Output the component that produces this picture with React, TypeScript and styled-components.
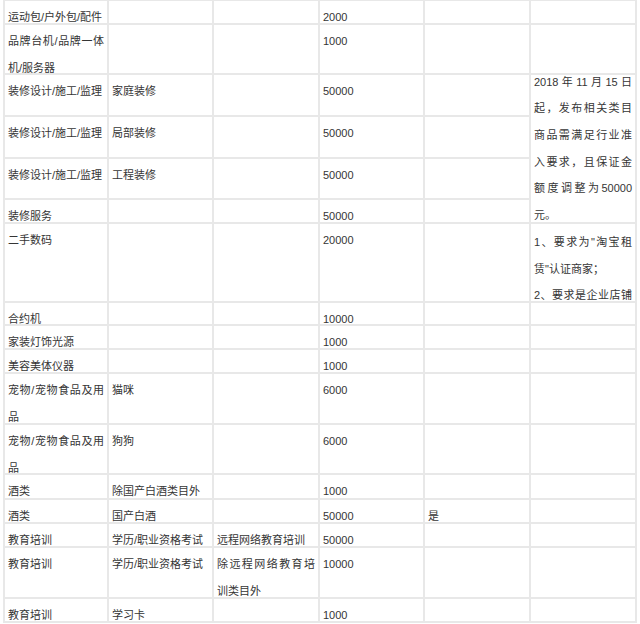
import React from "react";
import styled, { createGlobalStyle } from "styled-components";

const GlobalStyle = createGlobalStyle`
  html, body {
    margin: 0;
    padding: 0;
    background: #ffffff;
    overflow: hidden;
  }
`;

const LINE = "#e8e8e8";

const Table = styled.div`
  display: grid;
  grid-template-columns: 102px 103px 104px 103px 104px 104px;
  grid-template-rows: 22px 48px 40px 40px 39px 22px 77px 21px 22px 22px 49px 48px 23px 22px 22px 49px 22px;
  gap: 2px;
  padding: 2px;
  margin: -1px 0 0 3px;
  width: max-content;
  background: ${LINE};
  font-family: "Liberation Sans", "Noto Sans CJK SC", sans-serif;
  font-size: 11px;
  line-height: 26.6px;
  color: #353535;
`;

const Cell = styled.div`
  background: #ffffff;
  padding: 3px 3px 0 3px;
  text-align: justify;
  min-width: 0;
  overflow: visible;
`;

const NoteCell = styled.div<{ $span: number }>`
  grid-row: span ${(p) => p.$span};
  background: #ffffff;
  padding: 0 3px;
  display: flex;
  flex-direction: column;
  justify-content: center;
`;

const NoteTop = styled(Cell)`
  padding-top: 5px;
`;

const Line = styled.span<{ $justify?: boolean }>`
  display: block;
  white-space: nowrap;
  text-align: ${(p) => (p.$justify ? "justify" : "left")};
  text-align-last: ${(p) => (p.$justify ? "justify" : "left")};
`;

type Row = [string, string, string, string, string];

const rows: Row[] = [
  ["运动包/户外包/配件", "", "", "2000", ""],
  ["品牌台机/品牌一体机/服务器", "", "", "1000", ""],
  ["装修设计/施工/监理", "家庭装修", "", "50000", ""],
  ["装修设计/施工/监理", "局部装修", "", "50000", ""],
  ["装修设计/施工/监理", "工程装修", "", "50000", ""],
  ["装修服务", "", "", "50000", ""],
  ["二手数码", "", "", "20000", ""],
  ["合约机", "", "", "10000", ""],
  ["家装灯饰光源", "", "", "1000", ""],
  ["美容美体仪器", "", "", "1000", ""],
  ["宠物/宠物食品及用品", "猫咪", "", "6000", ""],
  ["宠物/宠物食品及用品", "狗狗", "", "6000", ""],
  ["酒类", "除国产白酒类目外", "", "1000", ""],
  ["酒类", "国产白酒", "", "50000", "是"],
  ["教育培训", "学历/职业资格考试", "远程网络教育培训", "50000", ""],
  ["教育培训", "学历/职业资格考试", "除远程网络教育培训类目外", "10000", ""],
  ["教育培训", "学习卡", "", "1000", ""],
];

const depositNote = [
  "2018 年 11 月 15 日",
  "起，发布相关类目",
  "商品需满足行业准",
  "入要求，且保证金",
  "额度调整为50000",
  "元。",
];

const rentalNote = ['1、要求为"淘宝租', '赁"认证商家；', "2、要求是企业店铺"];

const lastColumn = (i: number) => {
  if (i === 2)
    return (
      <NoteCell key="note" $span={4}>
        {depositNote.map((t, j) => (
          <Line key={j} $justify={j < depositNote.length - 1}>
            {t}
          </Line>
        ))}
      </NoteCell>
    );
  if (i >= 3 && i <= 5) return null;
  if (i === 6)
    return (
      <NoteTop key="rent">
        <Line $justify>{rentalNote[0]}</Line>
        <Line>{rentalNote[1]}</Line>
        <Line $justify>{rentalNote[2]}</Line>
      </NoteTop>
    );
  return <Cell key="c6" />;
};

export default function App() {
  return (
    <>
      <GlobalStyle />
      <Table>
        {rows.map((r, i) => (
          <React.Fragment key={i}>
            {r.map((text, j) => (
              <Cell key={j}>{text}</Cell>
            ))}
            {lastColumn(i)}
          </React.Fragment>
        ))}
      </Table>
    </>
  );
}
